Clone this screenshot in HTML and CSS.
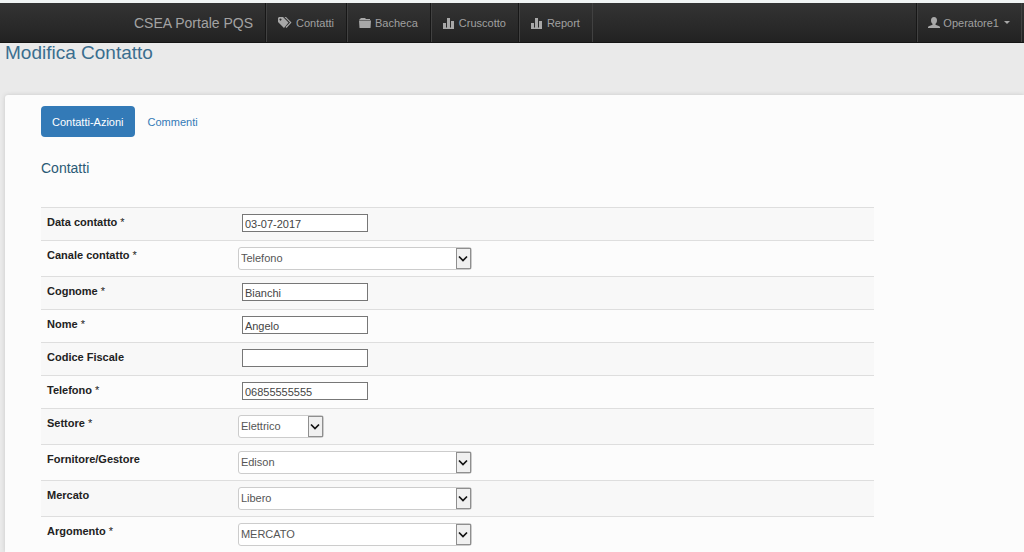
FILE: index.html
```html
<!DOCTYPE html>
<html lang="it">
<head>
<meta charset="utf-8">
<meta name="viewport" content="width=device-width, initial-scale=1">
<title>CSEA Portale PQS - Modifica Contatto</title>
<link rel="stylesheet" href="styles.css">
</head>
<body>
<svg class="defs" aria-hidden="true">
  <symbol id="chart" viewBox="0 0 12 12"><path d="M0 6h3v5H0zM4 1h3v10H4zM8 4h3v7H8zM0 10.500h11V12H0z"/></symbol>
  <symbol id="chevron" viewBox="0 0 10 8"><path d="M1 1.500l4 4 4-4" fill="none" stroke="#111" stroke-width="1.700"/></symbol>
</svg>
<header class="navbar">
  <a class="brand" href="#">CSEA Portale PQS</a>
  <nav class="menu">
    <a class="item" href="#"><svg class="icon tags" viewBox="0 0 14 12"><path fill-rule="evenodd" d="M0 1l1-1h4l5.500 5.500L6 11 0 5zM2.500 1.500a1 1 0 1 0 .01 0z"/><path d="M6.500 0H8l5.500 5.500L8.500 11l-1-1L12 5.500z"/></svg>Contatti</a>
    <a class="item" href="#"><svg class="icon" viewBox="0 0 12 12"><path d="M1 2l1-1h4l1 1h4v1H0zM0 3.500h12L11.500 11H.5z"/></svg>Bacheca</a>
    <a class="item" href="#"><svg class="icon"><use href="#chart"/></svg>Cruscotto</a>
    <a class="item" href="#"><svg class="icon"><use href="#chart"/></svg>Report</a>
  </nav>
  <button class="item user" type="button"><svg class="icon" viewBox="0 0 12 12"><path d="M6 0c2 0 3 1.300 3 3.200C9 5 8.300 6 7.500 6.800v1c1.500.8 4 1.200 4.500 2.200v1H0v-1C.5 9 3 8.600 4.500 7.800v-1C3.700 6 3 5 3 3.200 3 1.300 4 0 6 0z"/></svg>Operatore1<span class="caret"></span></button>
</header>
<main>
  <h1>Modifica Contatto</h1>
  <section class="panel">
    <nav class="pills">
      <a class="pill active" href="#">Contatti-Azioni</a>
      <a class="pill" href="#">Commenti</a>
    </nav>
    <h2>Contatti</h2>
    <form class="form">
      <div class="row"><label for="data">Data contatto <span class="req">*</span></label><input id="data" type="text" value="03-07-2017"></div>
      <div class="row"><label for="canale">Canale contatto <span class="req">*</span></label><div class="select"><select id="canale"><option>Telefono</option></select><span class="arrow"><svg><use href="#chevron"/></svg></span></div></div>
      <div class="row"><label for="cognome">Cognome <span class="req">*</span></label><input id="cognome" type="text" value="Bianchi"></div>
      <div class="row"><label for="nome">Nome <span class="req">*</span></label><input id="nome" type="text" value="Angelo"></div>
      <div class="row"><label for="cf">Codice Fiscale</label><input id="cf" type="text"></div>
      <div class="row"><label for="tel">Telefono <span class="req">*</span></label><input id="tel" type="text" value="06855555555"></div>
      <div class="row"><label for="settore">Settore <span class="req">*</span></label><div class="select small"><select id="settore"><option>Elettrico</option></select><span class="arrow"><svg><use href="#chevron"/></svg></span></div></div>
      <div class="row"><label for="fornitore">Fornitore/Gestore</label><div class="select"><select id="fornitore"><option>Edison</option></select><span class="arrow"><svg><use href="#chevron"/></svg></span></div></div>
      <div class="row"><label for="mercato">Mercato</label><div class="select"><select id="mercato"><option>Libero</option></select><span class="arrow"><svg><use href="#chevron"/></svg></span></div></div>
      <div class="row"><label for="argomento">Argomento <span class="req">*</span></label><div class="select"><select id="argomento"><option>MERCATO</option></select><span class="arrow"><svg><use href="#chevron"/></svg></span></div></div>
    </form>
  </section>
</main>
</body>
</html>
```
FILE: styles.css
```css
* { box-sizing: border-box; }
html { scrollbar-width: none; }
body {
  margin: 0;
  background: #eaeaea;
  color: #222;
  font: 11px/16px "Liberation Sans", Arial, sans-serif;
}
input, select, button { font: inherit; }
a { text-decoration: none; }
.defs { position: absolute; width: 0; height: 0; }

.navbar {
  display: flex;
  height: 43px;
  padding: 0 2px 0 123px;
  border-top: 3px solid #f1f4f4;
  border-bottom: 1px solid #151515;
  background: linear-gradient(#343434, #222);
}
.brand {
  display: flex;
  align-items: center;
  padding: 0 12px 0 11px;
  color: #a3a3a3;
  font-size: 14px;
}
.menu { display: flex; border-right: 1px solid #414141; }
.item {
  display: flex;
  align-items: center;
  gap: 4px;
  padding: 0 12px;
  border: 0;
  border-left: 1px solid #171717;
  box-shadow: inset 1px 0 #414141;
  background: none;
  color: #a0a0a0;
}
.icon { width: 12px; height: 12px; fill: #a8a8a8; }
.icon.tags { width: 14px; }
.user {
  gap: 3px;
  padding: 0 11px;
  margin-left: auto;
  border-right: 1px solid #414141;
}
.caret {
  margin-left: 2px;
  border: 3px solid transparent;
  border-top-color: #a8a8a8;
  border-bottom: 0;
}

h1, h2 { margin: 0; font-weight: 400; }
h1 {
  padding: 0 5px;
  color: #3a6e8f;
  font-size: 19px;
  line-height: 20px;
}
.panel {
  margin: 32px 0 0 5px;
  padding: 11px 36px 0;
  background: #fcfcfc;
  border-radius: 3px 0 0 0;
  box-shadow: 0 0 4px #c8c8c8;
}
.pills { display: flex; gap: 2px; }
.pill {
  padding: 8px 11px 7px;
  border-radius: 4px;
  color: #337ab7;
}
.pill.active { background: #337ab7; color: #fff; }
h2 {
  margin: 23px 0 31px;
  color: #2a5a75;
  font-size: 14px;
  line-height: 16px;
}
.form { width: 88%; }
.row {
  display: grid;
  grid-template-columns: 23% 1fr;
  align-items: start;
  padding: 6px;
  border-top: 1px solid #dedede;
}
.row:nth-child(odd) { background: #f8f8f8; }
label { font-weight: 700; }
.req { font-weight: 400; }
input {
  width: 126px;
  height: 18px;
  margin: 0 0 2px 6px;
  padding: 2px 2px 0;
  border: 1px solid #777;
  background: #fff;
  color: #444;
}
.select {
  position: relative;
  width: 234px;
  height: 23px;
  margin-left: 2px;
}
.select.small { width: 86px; }
select {
  display: block;
  width: 100%;
  height: 100%;
  padding: 0 20px 1px 2px;
  appearance: none;
  border: 1px solid #ccc;
  border-radius: 3px;
  background: #fff;
  color: #555;
}
.arrow {
  position: absolute;
  top: 1px;
  right: 1px;
  display: grid;
  place-items: center;
  width: 15px;
  height: 21px;
  border: 1px solid #8f8f8f;
  background: #f0f0f0;
  pointer-events: none;
}
.arrow svg { width: 10px; height: 8px; }
```
